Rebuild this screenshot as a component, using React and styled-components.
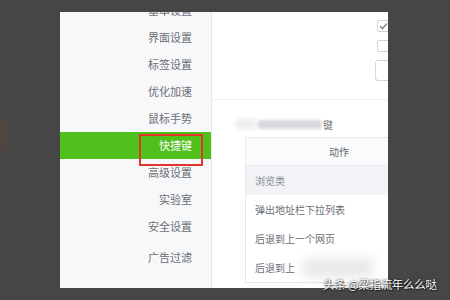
import React from "react";
import styled, { createGlobalStyle } from "styled-components";

const Global = createGlobalStyle`
  html, body { margin: 0; padding: 0; background: #464646; }
  body { font-family: "Noto Sans CJK SC", "Noto Sans", sans-serif; }
`;

const Page = styled.div`
  width: 450px;
  height: 300px;
  background: #464646;
  position: relative;
  overflow: hidden;
  padding: 12px 0 0 60px;
  box-sizing: border-box;
`;

const Dialog = styled.div`
  width: 328px;
  height: 276px;
  display: flex;
  background: #fff;
  overflow: hidden;
`;

const Sidebar = styled.nav`
  width: 151px;
  flex: none;
  background: #f7f8fa;
  border-right: 1px solid #e8e9eb;
  display: flex;
  flex-direction: column;
  overflow: hidden;
`;

const NavList = styled.div`
  margin-top: -15px;
  display: flex;
  flex-direction: column;
`;

const NavItem = styled.div`
  position: relative;
  height: 27px;
  line-height: 27px;
  padding-right: 19px;
  text-align: right;
  font-size: 11px;
  color: ${(p) => (p.$active ? "#ffffff" : "#6b6f75")};
  background: ${(p) => (p.$active ? "#50c01c" : "transparent")};
  margin-top: ${(p) => (p.$gap ? "4px" : "0")};
`;

const Highlight = styled.span`
  position: absolute;
  left: 79px;
  top: 2px;
  width: 64px;
  height: 32px;
  box-sizing: border-box;
  border: 2px solid #e3352b;
  pointer-events: none;
`;

const Content = styled.main`
  flex: 1;
  min-width: 0;
  display: flex;
  flex-direction: column;
  overflow: hidden;
`;

const Options = styled.div`
  height: 88px;
  flex: none;
  box-sizing: border-box;
  border-bottom: 1px solid #eeeff1;
  padding: 8px 0 0 165px;
  display: flex;
  flex-direction: column;
  gap: 8px;
`;

const Check = styled.span`
  width: 12px;
  height: 12px;
  flex: none;
  box-sizing: border-box;
  border: 1px solid #cfd2d6;
  border-radius: 2px;
  background: #fff;
  display: flex;
  align-items: center;
  justify-content: center;
`;

const SmallButton = styled.span`
  width: 40px;
  height: 21px;
  box-sizing: border-box;
  border: 1px solid #d4d6d9;
  border-radius: 3px;
  background: #fff;
  margin-left: -2px;
`;

const Section = styled.div`
  padding: 13px 0 0 33px;
  display: flex;
  flex-direction: column;
`;

const Title = styled.div`
  height: 22px;
  display: flex;
  align-items: center;
  gap: 1px;
  font-size: 10px;
  color: #777;
  margin-left: -10px;
`;

const Blur = styled.span`
  display: block;
  width: ${(p) => p.$w}px;
  height: ${(p) => p.$h}px;
  background: ${(p) => p.$bg};
  filter: blur(${(p) => p.$b}px);
  border-radius: 3px;
`;

const Table = styled.div`
  width: 186px;
  margin-top: 2px;
  border: 1px solid #e6e8eb;
  border-right: none;
  display: flex;
  flex-direction: column;
`;

const HeadRow = styled.div`
  height: 27px;
  line-height: 27px;
  text-align: center;
  font-size: 10px;
  color: #666;
  background: #fafbfc;
  border-bottom: 1px solid #eceef1;
`;

const Row = styled.div`
  height: 29px;
  display: flex;
  align-items: center;
  gap: 8px;
  padding-left: 9px;
  font-size: 10px;
  color: ${(p) => (p.$group ? "#8a8f96" : "#6a6e74")};
  background: ${(p) => (p.$group ? "#f1f3f6" : "#fff")};
`;

const Watermark = styled.div`
  position: absolute;
  left: 323px;
  top: 276px;
  font-size: 11.5px;
  line-height: 16px;
  color: #fff;
  letter-spacing: -0.3px;
  text-shadow: 0 0 2px rgba(0, 0, 0, 0.8), 1px 1px 1px rgba(0, 0, 0, 0.6);
  white-space: nowrap;
`;

const BgSmear = styled.div`
  position: absolute;
  left: -6px;
  top: 118px;
  width: 14px;
  height: 32px;
  background: #5a4a40;
  filter: blur(3px);
  opacity: 0.6;
`;

const navItems = [
  "基本设置",
  "界面设置",
  "标签设置",
  "优化加速",
  "鼠标手势",
  "快捷键",
  "高级设置",
  "实验室",
  "安全设置",
  "广告过滤",
];

export default function App() {
  return (
    <>
      <Global />
      <Page>
        <BgSmear />
        <Dialog>
          <Sidebar>
            <NavList>
              {navItems.map((t, i) => (
                <NavItem key={t} $active={t === "快捷键"} $gap={i === navItems.length - 1}>
                  {t}
                  {t === "快捷键" && <Highlight />}
                </NavItem>
              ))}
            </NavList>
          </Sidebar>
          <Content>
            <Options>
              <Check>
                <svg width="9" height="8" viewBox="0 0 9 8">
                  <path d="M1 4.2 L3.4 6.5 L8 1.5" fill="none" stroke="#8a8d91" strokeWidth="1.6" />
                </svg>
              </Check>
              <Check />
              <SmallButton />
            </Options>
            <Section>
              <Title>
                <Blur $w={22} $h={10} $bg="#eceef0" $b={2} />
                <Blur $w={64} $h={9} $bg="#d6d8db" $b={1.5} />
                <span>键</span>
              </Title>
              <Table>
                <HeadRow>动作</HeadRow>
                <Row $group>浏览类</Row>
                <Row>弹出地址栏下拉列表</Row>
                <Row>后退到上一个网页</Row>
                <Row>
                  后退到上
                  <Blur $w={70} $h={18} $bg="#e6e7e9" $b={6} />
                </Row>
              </Table>
            </Section>
          </Content>
        </Dialog>
        <Watermark>头条 @梁指流年么么哒</Watermark>
      </Page>
    </>
  );
}
